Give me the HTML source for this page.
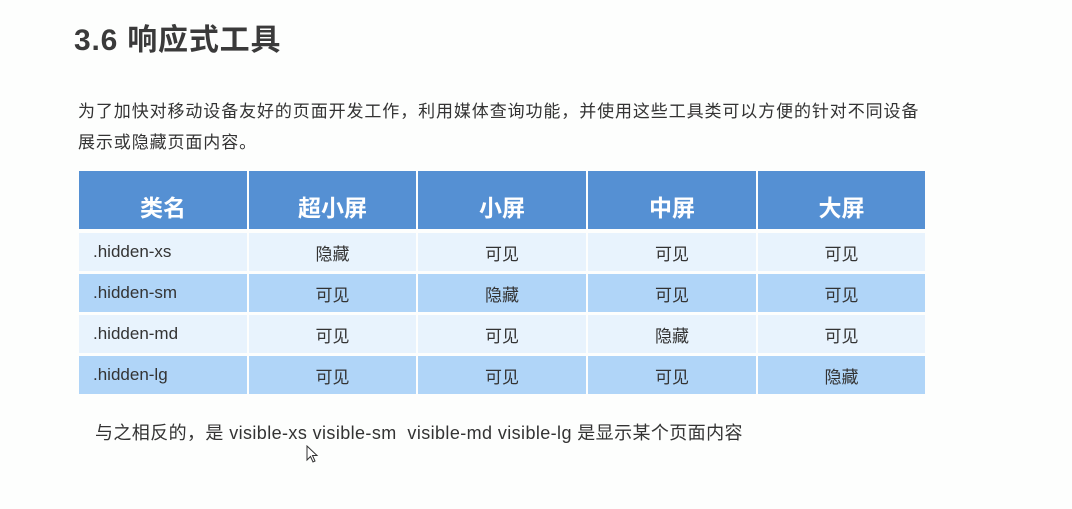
<!DOCTYPE html>
<html><head><meta charset="utf-8"><style>
body{margin:0;width:1072px;height:509px;background:#fdfefd;font-family:"Liberation Sans","Noto Sans CJK SC",sans-serif;color:#333;position:relative;overflow:hidden}
.t{position:absolute;left:74px;top:15px;font-size:30px;font-weight:bold;color:#3a3a3a;letter-spacing:0.8px}
.p{position:absolute;left:78px;font-size:17px;color:#333;white-space:nowrap;letter-spacing:0.9px}
table{position:absolute;left:79px;top:171px;border-collapse:separate;border-spacing:2px 0;margin-left:-2px}
td,th{padding:0;text-align:center;font-size:17px}
th{background:#5590d3;color:#fff;font-size:23px;height:58px;border-bottom:4px solid #fdfefd;padding-top:12px;height:46px}
td{height:38px;border-bottom:3px solid #fdfefd}
tr.a td{background:#e8f3fd}tr.b td{background:#b0d5f8}
td:first-child{text-align:left;padding-left:14px}
</style></head><body>
<div class="t">3.6 响应式工具</div>
<div class="p" style="top:97px">为了加快对移动设备友好的页面开发工作，利用媒体查询功能，并使用这些工具类可以方便的针对不同设备</div>
<div class="p" style="top:128px">展示或隐藏页面内容。</div>
<table>
<tr><th style="width:168px">类名</th><th style="width:167px">超小屏</th><th style="width:168px">小屏</th><th style="width:168px">中屏</th><th style="width:167px">大屏</th></tr>
<tr class="a"><td>.hidden-xs</td><td>隐藏</td><td>可见</td><td>可见</td><td>可见</td></tr>
<tr class="b"><td>.hidden-sm</td><td>可见</td><td>隐藏</td><td>可见</td><td>可见</td></tr>
<tr class="a"><td>.hidden-md</td><td>可见</td><td>可见</td><td>隐藏</td><td>可见</td></tr>
<tr class="b"><td>.hidden-lg</td><td>可见</td><td>可见</td><td>可见</td><td>隐藏</td></tr>
</table>
<div class="p" style="left:95px;top:419px;letter-spacing:0.4px;font-size:18px">与之相反的，是 visible-xs visible-sm &nbsp;visible-md visible-lg 是显示某个页面内容</div>
<svg style="position:absolute;left:306px;top:445px" width="14" height="20" viewBox="0 0 14 20"><path d="M1 1 L1 15 L4.5 11.5 L7 17 L9 16 L6.5 10.5 L11 10.5 Z" fill="#fff" stroke="#333" stroke-width="1"/></svg>
</body></html>
